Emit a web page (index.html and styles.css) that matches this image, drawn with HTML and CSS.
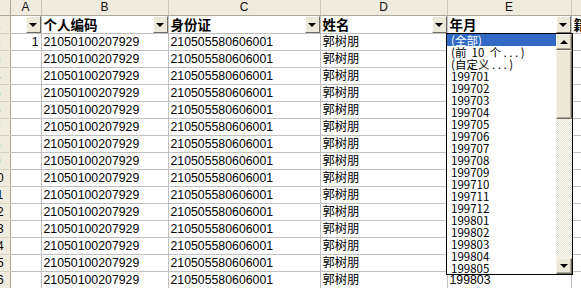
FILE: index.html
```html
<!DOCTYPE html>
<html lang="zh-CN">
  <head>
    <meta charset="UTF-8" />
    <meta name="viewport" content="width=device-width, initial-scale=1.0" />
    <title>Sheet1</title>
    <link rel="stylesheet" href="styles.css">
  </head>
  <body>
    <div class="sheet">
      <table class="grid">
        <colgroup>
          <col class="c-rh" /><col class="c-a" /><col class="c-b" /><col class="c-c" /><col class="c-d" /><col class="c-e" /><col class="c-f" />
        </colgroup>
        <thead>
          <tr class="letters">
            <th class="corner"></th><th>A</th><th>B</th><th>C</th><th>D</th><th>E</th><th>F</th>
          </tr>
        </thead>
        <tbody>
          <tr class="fields">
            <th class="rh"><div class="rn"><span>1</span></div></th>
            <td><div class="fh"><b></b><i class="dd"></i></div></td>
            <td><div class="fh"><b>个人编码</b><i class="dd"></i></div></td>
            <td><div class="fh"><b>身份证</b><i class="dd"></i></div></td>
            <td><div class="fh"><b>姓名</b><i class="dd"></i></div></td>
            <td><div class="fh"><b>年月</b><i class="dd"></i></div></td>
            <td><div class="fh"><b>籍贯</b><i class="dd"></i></div></td>
          </tr>
          <tr><th class="rh"><div class="rn"><span>2</span></div></th><td class="num">1</td><td>21050100207929</td><td>210505580606001</td><td>郭树朋</td><td>199701</td><td></td></tr>
          <tr><th class="rh"><div class="rn"><span>3</span></div></th><td class="num"></td><td>21050100207929</td><td>210505580606001</td><td>郭树朋</td><td>199702</td><td></td></tr>
          <tr><th class="rh"><div class="rn"><span>4</span></div></th><td class="num"></td><td>21050100207929</td><td>210505580606001</td><td>郭树朋</td><td>199703</td><td></td></tr>
          <tr><th class="rh"><div class="rn"><span>5</span></div></th><td class="num"></td><td>21050100207929</td><td>210505580606001</td><td>郭树朋</td><td>199704</td><td></td></tr>
          <tr><th class="rh"><div class="rn"><span>6</span></div></th><td class="num"></td><td>21050100207929</td><td>210505580606001</td><td>郭树朋</td><td>199705</td><td></td></tr>
          <tr><th class="rh"><div class="rn"><span>7</span></div></th><td class="num"></td><td>21050100207929</td><td>210505580606001</td><td>郭树朋</td><td>199706</td><td></td></tr>
          <tr><th class="rh"><div class="rn"><span>8</span></div></th><td class="num"></td><td>21050100207929</td><td>210505580606001</td><td>郭树朋</td><td>199707</td><td></td></tr>
          <tr><th class="rh"><div class="rn"><span>9</span></div></th><td class="num"></td><td>21050100207929</td><td>210505580606001</td><td>郭树朋</td><td>199708</td><td></td></tr>
          <tr><th class="rh"><div class="rn"><span>10</span></div></th><td class="num"></td><td>21050100207929</td><td>210505580606001</td><td>郭树朋</td><td>199709</td><td></td></tr>
          <tr><th class="rh"><div class="rn"><span>11</span></div></th><td class="num"></td><td>21050100207929</td><td>210505580606001</td><td>郭树朋</td><td>199710</td><td></td></tr>
          <tr><th class="rh"><div class="rn"><span>12</span></div></th><td class="num"></td><td>21050100207929</td><td>210505580606001</td><td>郭树朋</td><td>199711</td><td></td></tr>
          <tr><th class="rh"><div class="rn"><span>13</span></div></th><td class="num"></td><td>21050100207929</td><td>210505580606001</td><td>郭树朋</td><td>199712</td><td></td></tr>
          <tr><th class="rh"><div class="rn"><span>14</span></div></th><td class="num"></td><td>21050100207929</td><td>210505580606001</td><td>郭树朋</td><td>199801</td><td></td></tr>
          <tr><th class="rh"><div class="rn"><span>15</span></div></th><td class="num"></td><td>21050100207929</td><td>210505580606001</td><td>郭树朋</td><td>199802</td><td></td></tr>
          <tr><th class="rh"><div class="rn"><span>16</span></div></th><td class="num"></td><td>21050100207929</td><td>210505580606001</td><td>郭树朋</td><td>199803</td><td></td></tr>
        </tbody>
      </table>

      <!-- autofilter dropdown opened on the 年月 column -->
      <div class="filter-list">
        <ul>
          <li class="sel">(全部)</li>
          <li>(前  10  个 . . . )</li>
          <li>(自定义 . . . )</li>
          <li>199701</li>
          <li>199702</li>
          <li>199703</li>
          <li>199704</li>
          <li>199705</li>
          <li>199706</li>
          <li>199707</li>
          <li>199708</li>
          <li>199709</li>
          <li>199710</li>
          <li>199711</li>
          <li>199712</li>
          <li>199801</li>
          <li>199802</li>
          <li>199803</li>
          <li>199804</li>
          <li>199805</li>
        </ul>
        <div class="vscroll">
          <div class="sbtn up"></div>
          <div class="thumb"></div>
          <div class="track"></div>
          <div class="sbtn down"></div>
        </div>
      </div>
    </div>
  </body>
</html>
```

FILE: styles.css
```css
* {
  box-sizing: border-box;
}
body {
  margin: 0;
  background: #fff;
  color: #000;
  font-family: "Liberation Sans", "Noto Sans CJK SC", sans-serif;
  font-size: 12px;
}
.sheet {
  position: relative;
  width: 581px;
  height: 288px;
  overflow: hidden;
}

/* grid */
.grid {
  border-collapse: collapse;
  table-layout: fixed;
  width: 651px;
}
.c-rh { width: 10px; }
.c-a { width: 31px; }
.c-b { width: 127px; }
.c-c { width: 152px; }
.c-d { width: 127px; }
.c-e { width: 124px; }
.c-f { width: 80px; }

.grid td {
  height: 17px;
  padding: 0 0 0 2px;
  border: 1px solid #c0c0c0;
  border-top: none;
  white-space: nowrap;
  overflow: hidden;
  font-size: 12.3px;
  line-height: 16px;
}
.grid td.num {
  text-align: right;
  padding: 0 2px 0 0;
}

/* column letters */
.letters th {
  height: 15px;
  padding: 0;
  background: #efebde;
  border-right: 1px solid #cbc7b8;
  border-bottom: 1px solid #aca899;
  font-weight: normal;
  font-size: 12px;
  line-height: 14px;
  color: #111;
}
.letters .corner {
  border-right: 1px solid #aca899;
}

/* row numbers, only their right end shows */
.rh {
  padding: 0;
  background: #efebde;
  border-right: 1px solid #aca899;
  border-bottom: 1px solid #d6d2c2;
  font-weight: normal;
}
.rn {
  display: flex;
  justify-content: flex-end;
  overflow: hidden;
}
.rn span {
  flex: 0 0 25px;
  text-align: center;
  font-size: 12px;
  line-height: 16px;
}

/* field header row */
.fields td {
  height: 18px;
  padding: 0;
}
.fh {
  display: flex;
  align-items: center;
  justify-content: space-between;
  height: 17px;
}
.fh b {
  margin-left: 2px;
  font-family: "Noto Sans CJK SC", sans-serif;
  font-size: 13.5px;
  font-weight: bold;
  line-height: 17px;
  white-space: nowrap;
}
.dd {
  flex: 0 0 15px;
  height: 17px;
  display: flex;
  align-items: center;
  justify-content: center;
  background: #ece9d8;
  border: 1px solid;
  border-color: #fff #716f64 #716f64 #fff;
}
.dd::before {
  content: "";
  border-left: 4px solid transparent;
  border-right: 4px solid transparent;
  border-top: 4px solid #000;
  margin-top: 1px;
}

/* dropdown list */
.filter-list {
  position: absolute;
  left: 446px;
  top: 33px;
  width: 127px;
  height: 242px;
  display: flex;
  background: #fff;
  border: 1px solid #000;
}
.filter-list ul {
  flex: 1;
  margin: 0;
  padding: 0;
  list-style: none;
}
.filter-list li {
  height: 12px;
  padding-left: 4px;
  font-family: "Noto Sans CJK SC", sans-serif;
  font-size: 11.5px;
  line-height: 12px;
  white-space: pre;
}
.filter-list li.sel {
  background: #316ac5;
  color: #fff;
}

.vscroll {
  flex: 0 0 16px;
  display: flex;
  flex-direction: column;
}
.sbtn,
.thumb {
  background: #ece9d8;
  border: 1px solid;
  border-color: #f4f3ee #716f64 #716f64 #f4f3ee;
  box-shadow: inset -1px -1px 0 #aca899;
}
.sbtn {
  height: 16px;
  display: flex;
  align-items: center;
  justify-content: center;
}
.sbtn::before {
  content: "";
  border-left: 4px solid transparent;
  border-right: 4px solid transparent;
}
.sbtn.up::before {
  border-bottom: 4px solid #000;
}
.sbtn.down::before {
  border-top: 4px solid #000;
}
.thumb {
  height: 69px;
}
.track {
  flex: 1;
  background: repeating-conic-gradient(#fff 0 25%, #e3e0d0 0 50%) 0 0 / 2px 2px;
}
```
